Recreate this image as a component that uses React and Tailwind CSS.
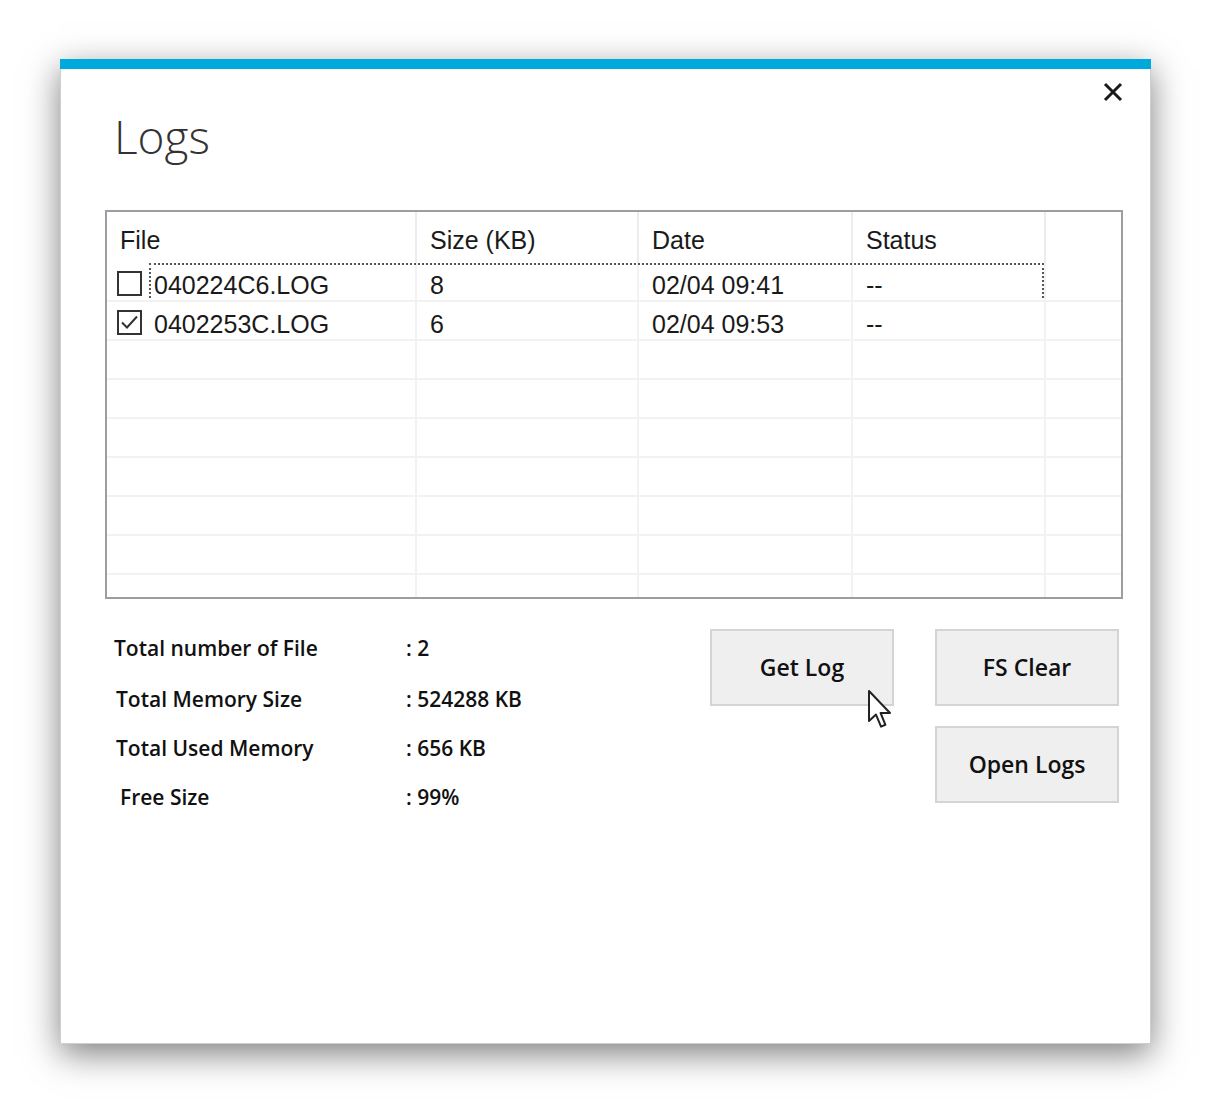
import React from "react";

const cols = [310, 222, 214, 193];

const files = [
  { name: "040224C6.LOG", size: "8", date: "02/04 09:41", status: "--", checked: false },
  { name: "0402253C.LOG", size: "6", date: "02/04 09:53", status: "--", checked: true },
];

const stats = [
  { label: "Total number of File", value: ": 2", pad: "pl-0", h: "h-[53px]" },
  { label: "Total Memory Size", value: ": 524288 KB", pad: "pl-[2px]", h: "h-[50px]" },
  { label: "Total Used Memory", value: ": 656 KB", pad: "pl-[2px]", h: "h-[48px]" },
  { label: "Free Size", value: ": 99%", pad: "pl-[6px]", h: "h-[50px]" },
];

function CheckBox({ checked }) {
  return (
    <div className="w-[25px] h-[25px] border-2 border-[#333] bg-white flex items-center justify-center shrink-0">
      {checked && (
        <svg width="19" height="19" viewBox="0 0 19 19">
          <path d="M2 9.5 L7 14.5 L17 3.5" fill="none" stroke="#333" strokeWidth="2" />
        </svg>
      )}
    </div>
  );
}

function Btn({ children }) {
  return (
    <button className="w-[184px] h-[77px] bg-[#efefef] border-2 border-[#d4d4d4] text-[23px] font-semibold text-[#111] font-['Open_Sans',sans-serif]">
      {children}
    </button>
  );
}

export default function App() {
  const emptyRows = Array.from({ length: 7 });

  return (
    <div className="w-[1206px] h-[1100px] bg-white pt-[59px] pl-[60px]">
      <div className="relative w-[1091px] h-[985px] bg-white border border-[#cfcfcf] shadow-[0_10px_32px_rgba(0,0,0,0.5)] flex flex-col">
        <div className="h-[10px] bg-[#00a9dc] -mx-px -mt-px" />

        {/* close */}
        <svg
          className="absolute top-[22px] right-[27px]"
          width="20"
          height="20"
          viewBox="0 0 20 20"
        >
          <path d="M2 2 L18 18 M18 2 L2 18" stroke="#1a1a1a" strokeWidth="3" />
        </svg>

        <h1 className="ml-[53px] mt-[39px] text-[46px] leading-[56px] font-light text-[#333] font-['Open_Sans',sans-serif]">
          Logs
        </h1>

        {/* list view */}
        <div className="ml-[44px] mt-[46px] w-[1018px] h-[389px] border-2 border-[#9b9da3] overflow-hidden font-['Liberation_Sans',Arial,sans-serif] text-[25px] text-[#1a1a1a]">
          <div className="flex h-[51px] items-center">
            {cols.map((w, i) => (
              <div
                key={i}
                style={{ width: w }}
                className="h-full flex items-center border-r-2 border-[#ececec] pl-[13px] pt-[6px]"
              >
                {["File", "Size (KB)", "Date", "Status"][i]}
              </div>
            ))}
          </div>

          {files.map((f, r) => (
            <div key={f.name} className="relative flex h-[39px] border-b-2 border-[#f2f2f2]">
              <div style={{ width: cols[0] }} className="flex items-center gap-[12px] pl-[10px] pt-[3px] border-r-2 border-[#f2f2f2]">
                <CheckBox checked={f.checked} />
                <span className="pt-[6px]">{f.name}</span>
              </div>
              <div style={{ width: cols[1] }} className="flex items-center pl-[13px] pt-[9px] border-r-2 border-[#f2f2f2]">
                {f.size}
              </div>
              <div style={{ width: cols[2] }} className="flex items-center pl-[13px] pt-[9px] border-r-2 border-[#f2f2f2]">
                {f.date}
              </div>
              <div style={{ width: cols[3] }} className="flex items-center pl-[13px] pt-[9px] border-r-2 border-[#f2f2f2]">
                {f.status}
              </div>
              {r === 0 && (
                <div className="absolute left-[42px] w-[895px] top-0 h-[35px] border-2 border-b-0 border-dotted border-[#555]" />
              )}
            </div>
          ))}

          {emptyRows.map((_, r) => (
            <div key={r} className="flex h-[39px] border-b-2 border-[#f2f2f2]">
              {cols.map((w, i) => (
                <div key={i} style={{ width: w }} className="h-full border-r-2 border-[#f2f2f2]" />
              ))}
            </div>
          ))}
        </div>

        {/* bottom area */}
        <div className="flex items-start mt-[30px] ml-[53px]">
          <div className="w-[596px] -mt-[7px] font-['Open_Sans',sans-serif] text-[21px] font-semibold text-[#111]">
            {stats.map((s) => (
              <div key={s.label} className={`flex ${s.h} items-center`}>
                <div className={`w-[292px] ${s.pad}`}>{s.label}</div>
                <div>{s.value}</div>
              </div>
            ))}
          </div>

          <div className="relative grid grid-cols-[184px_184px] content-start gap-x-[41px] gap-y-[20px]">
            <Btn>Get Log</Btn>
            <Btn>FS Clear</Btn>
            <div />
            <Btn>Open Logs</Btn>

            {/* mouse pointer */}
            <svg
              className="absolute left-[157px] top-[60px]"
              width="28"
              height="42"
              viewBox="0 0 14 21"
            >
              <path
                d="M1 1 L1 16 L4.5 12.8 L7 18.8 L9.2 17.9 L6.8 12 L11.5 12 Z"
                fill="#fff"
                stroke="#222"
                strokeWidth="1"
                strokeLinejoin="round"
              />
            </svg>
          </div>
        </div>
      </div>
    </div>
  );
}
